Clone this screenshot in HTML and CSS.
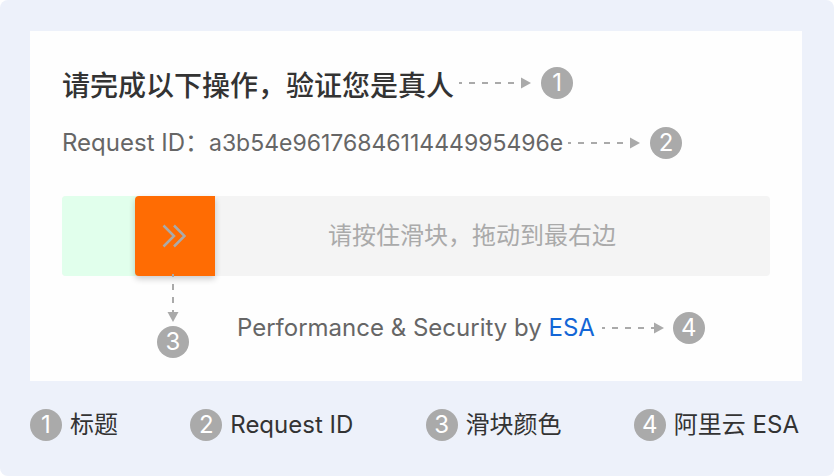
FILE: index.html
```
<!DOCTYPE html>
<html lang="zh-CN">
<head>
<meta charset="utf-8" />
<title>ESA</title>
<link rel="stylesheet" href="styles.css">
</head>
<body>
<div class="page">
  <main class="card">
    <div class="row">
      <h1>请完成以下操作，验证您是真人</h1>
      <svg class="arrow" width="76" height="12" viewBox="0 0 76 12">
        <path class="dash" d="M3 6H66" />
        <path class="head" d="M65 0.5L75 6L65 11.5Z" />
      </svg>
      <span class="badge">1</span>
    </div>
    <div class="row request">
      <span>Request ID：<span class="hash">a3b54e9617684611444995496e</span></span>
      <svg class="arrow" width="76" height="12" viewBox="0 0 76 12">
        <path class="dash" d="M3 6H66" />
        <path class="head" d="M65 0.5L75 6L65 11.5Z" />
      </svg>
      <span class="badge">2</span>
    </div>

    <div class="slider" id="slider" style="--ratio: 0.116">
      <div class="passed"></div>
      <label for="drag">请按住滑块，拖动到最右边</label>
      <input type="range" id="drag" min="0" max="1000" value="116" />
      <svg class="chevrons" width="24" height="24" viewBox="0 0 24 24">
        <path d="M1.5 1.5L12 12L1.5 22.5M12 1.5L22.5 12L12 22.5" />
      </svg>
      <div class="pointer">
        <svg width="12" height="52" viewBox="0 0 12 52">
          <path class="dash" d="M6 0V40" />
          <path class="head" d="M0.5 38L6 48L11.5 38Z" />
        </svg>
        <span class="badge">3</span>
      </div>
    </div>

    <div class="row powered">
      <span>Performance &amp; Security by <a href="#">ESA</a></span>
      <svg class="arrow" width="67" height="12" viewBox="0 0 67 12">
        <path class="dash" d="M5 6H57" />
        <path class="head" d="M57 0.5L67 6L57 11.5Z" />
      </svg>
      <span class="badge">4</span>
    </div>
  </main>

  <ul class="legend">
    <li><span class="badge">1</span>标题</li>
    <li><span class="badge">2</span>Request ID</li>
    <li><span class="badge">3</span>滑块颜色</li>
    <li><span class="badge">4</span>阿里云 ESA</li>
  </ul>
</div>

<script>
document.querySelector('#drag').addEventListener('input', function (e) {
  document.querySelector('#slider').style.setProperty('--ratio', e.target.value / 1000);
}, false);
</script>
</body>
</html>
```
FILE: styles.css
```
* {
  box-sizing: border-box;
}
body {
  margin: 0;
  background-color: #fff;
  color: #666;
  font-family: Inter, 'Noto Sans CJK SC', sans-serif;
  font-size: 24px;
  line-height: 40px;
}
.page {
  min-height: 100vh;
  padding: 31px 32px 24px 30px;
  border-radius: 8px;
  background-color: #edf1fa;
}
.card {
  padding: 32px 32px 33px;
  background-color: #fefefe;
}
.row {
  display: flex;
  align-items: center;
  height: 40px;
  white-space: nowrap;
}
h1 {
  margin: 0;
  padding-top: 6px;
  color: #333;
  font-size: 28px;
  font-weight: 500;
}
.request {
  margin-top: 20px;
}
.hash {
  font-size: 23px;
}
.arrow {
  margin: 0 9px 0 2px;
}
.dash {
  fill: none;
  stroke: #aaa;
  stroke-width: 2;
  stroke-dasharray: 6 7;
  stroke-dashoffset: 3;
}
.head {
  fill: #aaa;
}
.badge {
  flex: none;
  width: 32px;
  height: 32px;
  border-radius: 50%;
  background-color: #aaa;
  color: #fff;
  line-height: 32px;
  text-align: center;
}
.slider {
  --thumb: 80px;
  --left: calc((100% - var(--thumb)) * var(--ratio));
  position: relative;
  height: 80px;
  margin-top: 33px;
  border-radius: 4px;
  background-color: #f4f4f4;
}
.slider label {
  position: absolute;
  top: 0;
  left: 112px;
  right: 0;
  color: #aaa;
  line-height: 80px;
  text-align: center;
}
.passed {
  position: absolute;
  top: 0;
  left: 0;
  width: calc(var(--left) + 4px);
  height: 100%;
  border-radius: 4px 0 0 4px;
  background-color: #e1ffec;
}
.slider input {
  -webkit-appearance: none;
  appearance: none;
  position: absolute;
  top: 0;
  left: 0;
  width: 100%;
  height: 100%;
  margin: 0;
  background: none;
  outline: none;
}
.slider input::-webkit-slider-thumb {
  -webkit-appearance: none;
  width: 80px;
  height: 80px;
  border-radius: 4px 0 0 4px;
  background-color: #ff6c03;
  box-shadow: 0 3px 6px rgba(0, 0, 0, .2);
  cursor: pointer;
}
.chevrons {
  position: absolute;
  top: 28px;
  left: calc(var(--left) + 27px);
  fill: none;
  stroke: #aaa;
  stroke-width: 2.5;
  pointer-events: none;
}
.pointer {
  display: flex;
  flex-direction: column;
  align-items: center;
  position: absolute;
  top: 78px;
  left: calc(var(--left) + 22px);
  pointer-events: none;
}
.powered {
  margin-top: 32px;
  padding-left: 175px;
}
a {
  color: #1366d6;
  text-decoration: none;
}
.legend {
  display: flex;
  justify-content: space-between;
  margin: 28px 0 0;
  padding: 0 3px 0 0;
  color: #333;
  line-height: 32px;
  list-style: none;
  white-space: nowrap;
}
.legend li {
  display: flex;
  align-items: center;
  gap: 8px;
}
```
